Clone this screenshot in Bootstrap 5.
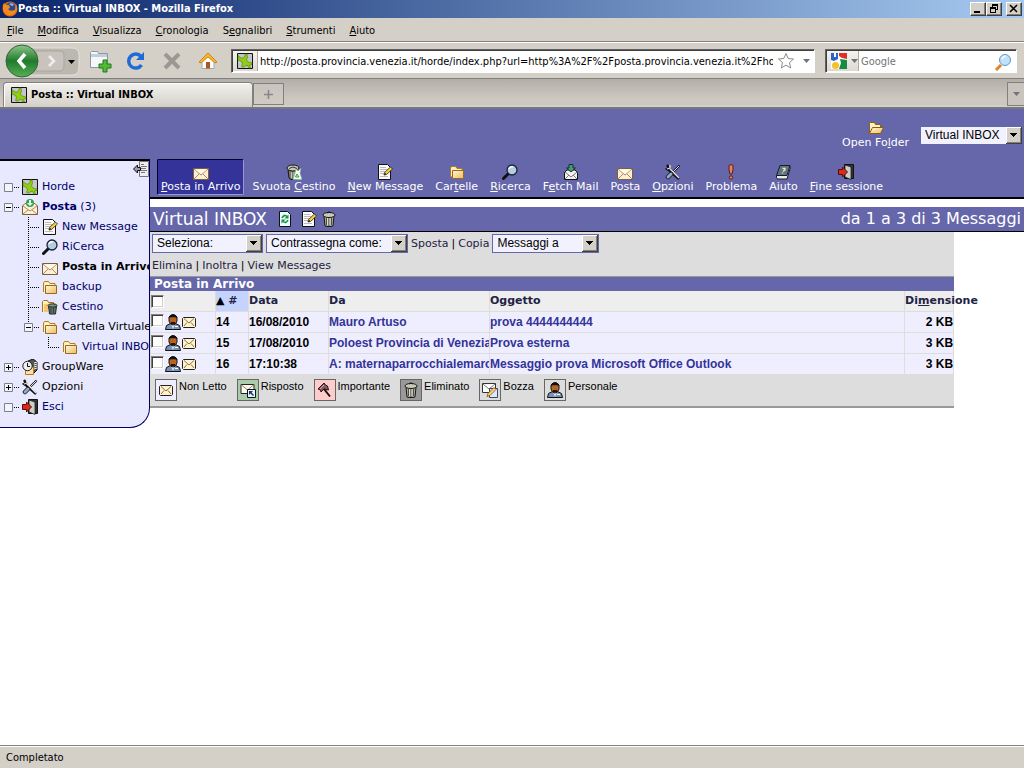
<!DOCTYPE html>
<html lang="it">
<head>
<meta charset="utf-8">
<meta name="viewport" content="width=device-width, initial-scale=1">
<title>Posta :: Virtual INBOX</title>
<link rel="stylesheet" href="https://cdn.jsdelivr.net/npm/bootstrap@5.3.0/dist/css/bootstrap.min.css">
<style>
:root{--chrome:#d4d0c8;--horde:#6666aa;--navy:#000066}
body{font-family:"DejaVu Sans Condensed","DejaVu Sans",sans-serif;font-size:11px;line-height:14px;color:#000;background:#fff}
button{border:0;padding:0;background:none;color:inherit;font:inherit;line-height:1}
svg{display:block;flex:none}
input{font:inherit;min-width:0}
.page{font-family:"DejaVu Sans",sans-serif}
.i16{width:16px;height:16px}
/* browser chrome */
.titlebar{height:18px;background:linear-gradient(90deg,#0a246a,#a6caf0);color:#fff;font-weight:700;padding:0 2px}
.winbtn{width:16px;height:14px;background:var(--chrome);border:1px solid;border-color:#fff #404040 #404040 #fff;box-shadow:inset -1px -1px #808080}
.chrome{background:var(--chrome)}
.menubar{height:24px;padding:3px 0 0 7px;gap:14px;border-bottom:1px solid #808080}
.menubar a{color:#000;text-decoration:none}
.navrow{height:37px;border-top:1px solid #fff;border-bottom:1px solid #808080;padding:0 7px 0 2px}
.backs{width:80px}
.tool{width:36px;display:flex;justify-content:center}
.field{height:24px;background:#fff;border:1px solid;border-color:#606060 #fff #fff #606060;box-shadow:inset 1px 1px #404040}
.field input{border:0;outline:0;background:none;padding:2px 0 0;margin-left:2px;flex:1}
.urlbox{margin-left:5px}
.findbox{margin-left:10px;width:192px}
.fieldbtn{height:20px;background:linear-gradient(#f4f3f0,#dcd9d2);border-right:1px solid #b0aca4;margin:1px 0 0 1px}
.tabs{height:30px;background:linear-gradient(#b3afa8,#ccc8c0 70%);border-bottom:2px solid #77777f;padding:3px 0 0 3px;box-shadow:inset 0 -2px #d4d0c8}
.tabitem{width:250px;height:25px;border:1px solid #808080;border-bottom:0;border-radius:4px 4px 0 0;background:linear-gradient(#f2f1ee,#d4d0c8);font-weight:700;padding:0 7px;box-shadow:inset 1px 1px #fff}
.tabnew{width:31px;height:22px;margin-top:1px;border:1px solid #808080;background:linear-gradient(#c8c4bd,#d0ccc4)}
.tablist{width:17px;height:24px;border:1px solid #808080;border-right:0;background:#c9c5be}
.statusbar{height:22px;background:var(--chrome);border-top:1px solid #fff;box-shadow:0 -1px #808080;padding:1px 6px 0}
/* webmail */
.top{background:var(--horde);height:50px;gap:11px;padding:2px 1px 0 0}
.page a{text-decoration:none}
.openf{color:#fff}
.pick{appearance:none;border:1px solid var(--horde);border-radius:0;background:#f2f2ff url("data:image/svg+xml,%3Csvg xmlns='http://www.w3.org/2000/svg' width='16' height='17' shape-rendering='crispEdges'%3E%3Crect width='16' height='17' fill='%23404040'/%3E%3Crect width='15' height='16' fill='%23fff'/%3E%3Crect x='1' y='1' width='14' height='15' fill='%23808080'/%3E%3Crect x='1' y='1' width='13' height='14' fill='%23d4d0c8'/%3E%3Cpath d='M4 6h7v1h-1v1h-1v1h-1v1h-1v-1h-1v-1h-1v-1h-1z'/%3E%3C/svg%3E") no-repeat right center;font:12px/17px "Liberation Sans",Arial,sans-serif;color:#000;height:19px;padding:0 18px 0 4px}
.side{width:150px;border-top:2px solid #000;border-right:1px solid var(--navy);border-bottom:1px solid var(--navy);border-radius:0 0 20px 0;background:#e8e8ff;padding:16px 0 10px;position:relative;overflow:hidden;flex:none}
.side ul{list-style:none;margin:0;padding:0 0 0 20px}
.side>ul{padding-left:2px}
.leaf{display:flex;align-items:center;height:20px;white-space:nowrap;color:var(--navy)}
.leaf a{color:inherit;margin-left:4px}
.leaf.dark{color:#000}
.twig{width:20px;height:20px}
.collapser{position:absolute;top:0;right:0}
.mainpane{min-width:0}
.bar{background:var(--horde);height:40px;border-bottom:2px solid #000;gap:4px;padding:0 7px}
.bar a{color:#fff;border:1px solid transparent;padding:1px 3px 0;height:36px;white-space:nowrap;display:flex;flex-direction:column;align-items:center;justify-content:end;border-radius:2px}
.bar a.on{background:#333399;border-color:#000033 #9999cc #9999cc #000033}
.heading{background:var(--horde);border-bottom:1px solid #000;margin-top:8px;height:25px;color:#fff;font-size:16px;line-height:20px;padding:0 3px}
.heading h1{font-size:17px;line-height:20px;font-weight:400;margin:0 6px 0 0}
.sheet{width:92%;background:#ddd;border-bottom:2px solid #999}
.acts{height:22px;padding:1px 2px 0;gap:3px}
.acts a{color:#222244}
.folder{background:var(--horde);color:#fff;font-size:12px;font-weight:700;line-height:14px;height:15px;border-top:1px solid #999;padding-left:4px;margin:0}
.mails{table-layout:fixed;width:100%;border-collapse:separate;border-spacing:1px;margin:-1px 0}
.mails td,.mails th{height:20px;padding:0;white-space:nowrap;vertical-align:middle}
.mails th{background:#eee;color:#222244;font-weight:700}
.mails th a{color:inherit}
.mails th.sorted{background:#c5d4ff}
.mails td{background:#eeeeff;font:bold 12px/18px "Liberation Sans",Arial,sans-serif}
.mails td a{color:#333399}
.mails .cut{overflow:hidden}
.tick{appearance:none;width:13px;height:13px;margin:0 1px 0 0;background:#fff;border:1px solid;border-color:#808080 #fff #fff #808080;box-shadow:inset 1px 1px #404040,inset -1px -1px #d4d0c8;flex:none}
.keys{height:32px;padding:5px 5px 0;gap:10px;font:11px/14px "Liberation Sans",Arial,sans-serif}
.swatch{width:22px;height:22px;border:1px solid #666;padding:2px;margin-right:2px}
.unread{background:#eeeeff}.answered{background:#aaccaa}.important{background:#ffcccc}.deleted{background:#999}
</style>
</head>
<body class="d-flex flex-column min-vh-100">
<svg width="0" height="0" class="position-absolute" aria-hidden="true">
<defs>
<linearGradient id="gr" x2="0" y2="1"><stop stop-color="#8cc68c"/><stop offset=".5" stop-color="#1f7a2a"/><stop offset="1" stop-color="#58b058"/></linearGradient>
<linearGradient id="fold" x2="1" y2="1"><stop stop-color="#fff8dc"/><stop offset="1" stop-color="#eebb5c"/></linearGradient>
</defs>
<symbol id="horde" viewBox="0 0 16 16"><path d="M.5.5h15v15H.5z" fill="#c2c6cc" stroke="#111"/><path d="M1 2.500l3 2.500h2.500L8 3V1h2l.5 3-1 3 1.500 2 4 1v1.500l-2.500.5 1 3H12l-1.500-2.500-2 0-1 1.500L5 14l-.5-1 1-2-1-2.500L1 7z" fill="#91cd10" stroke="#4e7e08" stroke-width=".6"/></symbol>
<symbol id="mail" viewBox="0 0 16 16"><path d="M.5 4.500h15v11H.5z" fill="#fdeed4" stroke="#77603f"/><path d="M1 5l7 6 7-6M1 15l5-5M15 15l-5-5" fill="none" stroke="#b18b63"/><path d="M2 5.500h12l-6 4.500z" fill="#fffaf0"/></symbol>
<symbol id="mailk" viewBox="0 0 16 16"><path d="M2.500 3.500h11l1 1v8l-1 1h-11l-1-1v-8z" fill="#fff2cc" stroke="#222"/><path d="M3 4.500l5 4.500 5-4.500M3 12l3-3.500M13 12l-3-3.500" fill="none" stroke="#8b714a"/></symbol>
<symbol id="post" viewBox="0 0 16 16"><path d="M.5 7L3 4.500h10L15.500 7v8.500H.5z" fill="#fdeed4" stroke="#77603f"/><path d="M1 7l7 5 7-5M1 15l5-4M15 15l-5-4" fill="none" stroke="#b18b63"/><circle cx="8" cy="4" r="4" fill="#30a350"/><path d="M7 1h2v3h2L8 7 5 4h2z" fill="#eaffea"/></symbol>
<symbol id="note" viewBox="0 0 16 16"><path d="M1.500.5h9l3 3v12h-12z" fill="#fafafa" stroke="#111"/><path d="M3 3.500h6M3 5.500h7M3 7.500h5M3 9.500h4M3 12.500h8" stroke="#bbb"/><path d="M7 11l.5-2.500L13.500 3l2 2-6 5.500z" fill="#ffcf3a" stroke="#222" stroke-width=".8"/><path d="M7 11l1-2 1.500 1z" fill="#111"/></symbol>
<symbol id="lens" viewBox="0 0 16 16"><path d="M1.500 14.500L6 10" stroke="#111" stroke-width="3" stroke-linecap="round"/><circle cx="10" cy="6" r="5" fill="#b4cde6" stroke="#1c2430" stroke-width="1.300"/><path d="M7 5a3 3 0 0 1 4-2" stroke="#fff" stroke-width="1.500" fill="none"/></symbol>
<symbol id="folder" viewBox="0 0 16 16"><path d="M1.500 13V4l1-1.500h4l1.500 2h5v2" fill="#fff1bd" stroke="#b37b20"/><path d="M3.500 6.500h11v8h-11z" fill="url(#fold)" stroke="#9a691d"/></symbol>
<symbol id="folderopen" viewBox="0 0 16 16"><path d="M1.500 13V3.500l1-1h4l1 2h5v3" fill="#fff1bd" stroke="#8a5c14"/><path d="M1.500 13.500l3-6h11l-3 6z" fill="url(#fold)" stroke="#8a5c14"/></symbol>
<symbol id="can" viewBox="0 0 16 16"><path d="M3 5h10l-1 10-2 .5H6L4 15z" fill="#a7a797" stroke="#181818"/><path d="M5.500 7v7M8 7v8M10.500 7v7" stroke="#4e4e45"/><path d="M6.500 7v7M9 7v7" stroke="#deded0"/><ellipse cx="8" cy="4" rx="6" ry="2.500" fill="#c9c9b9" stroke="#181818"/><path d="M6 2q2-2.500 4 0" fill="none" stroke="#181818"/></symbol>
<symbol id="bin" viewBox="0 0 16 16"><path d="M.5 13V2.500l1-1h4l1 2h5v3" fill="#fff1bd" stroke="#a77320"/><path d="M2 5h4v8H2z" fill="#f1c874"/><path d="M6.500 7h8l-1 8h-6z" fill="#65766a" stroke="#1d2520"/><ellipse cx="10.500" cy="6.500" rx="4.500" ry="1.700" fill="#7f9485" stroke="#1d2520"/><path d="M9 9v5M11.500 9v5" stroke="#33443a"/></symbol>
<symbol id="emptycan" viewBox="0 0 16 16"><path d="M2 6h10l-1 9.500H5L3 14z" fill="#77776c" stroke="#161616"/><path d="M5.500 8v6M8 8v6" stroke="#c9c9b9"/><ellipse cx="7" cy="4" rx="6" ry="3" fill="#c9c9b9" stroke="#161616"/><path d="M3 4.500q4-3 8 0" fill="none" stroke="#333"/><path d="M10 5l2 2 3-3-1 5 2 6.500H7L9 9z" fill="#f3fff3" stroke="#8ab092" stroke-width=".7"/><path d="M9.500 13l1.500-3 2 3z" fill="none" stroke="#2d9b49"/></symbol>
<symbol id="fetch" viewBox="0 0 16 16"><path d="M1.500 8.500L4 6h8l2.500 2.500v7h-13z" fill="#f3f3f3" stroke="#111"/><path d="M2 8l6 5 6-5M2 15l4-4M14 15l-4-4" fill="none" stroke="#777"/><path d="M6 .5h4V4h2.500L8 8 3.500 4H6z" fill="#4b9a6a" stroke="#133"/></symbol>
<symbol id="tools" viewBox="0 0 16 16"><path d="M14.500 1.500L7 9" stroke="#111" stroke-width="2"/><path d="M14 2L8 8" stroke="#ddd"/><path d="M2 1l2 3-2 1 3 2 9 8" fill="none" stroke="#111" stroke-width="2.400"/><path d="M5 1v3L2 5M5 5l9 9" fill="none" stroke="#e4e4e4" stroke-width="1.300"/><path d="M6 10l-3 3" stroke="#111" stroke-width="4.500" stroke-linecap="round"/><path d="M6 10l-3 3" stroke="#8daecb" stroke-width="3" stroke-linecap="round"/></symbol>
<symbol id="bang" viewBox="0 0 16 16"><path d="M6 1.500q2-2 4 0v4L9 10H7L6 5.500z" fill="#e98063" stroke="#5c1d10"/><circle cx="8" cy="13.500" r="1.700" fill="#e98063" stroke="#5c1d10"/></symbol>
<symbol id="book" viewBox="0 0 16 16"><path d="M1.500 11.500v2l1 1.500h9.500l3-10v-3" fill="#e9e9e9" stroke="#161c22"/><path d="M5 1.500h10l-3 10H1.500z" fill="#5c7488" stroke="#161c22"/><path d="M7.500 4.500h2.500v1.500L8 7.500m-.5 1v1" fill="none" stroke="#ffe9a0" stroke-width="1.300"/></symbol>
<symbol id="exit" viewBox="0 0 16 16"><path d="M6.500.5h9v14h-9z" fill="#333" stroke="#111"/><path d="M7 1l6 2V15.500L7 13z" fill="#c9ceca" stroke="#111" stroke-width=".7"/><path d="M.5 5.500h4V3l5 5-5 5v-2.500h-4z" fill="#dc2a1d" stroke="#5d0b06"/></symbol>
<symbol id="group" viewBox="0 0 16 16"><path d="M6 2l5-2 4 3v8l-4 4H6z" fill="#555" stroke="#111"/><path d="M12 4l3-1M12 6l3-1M12 8l3-1M12 10l3-1" stroke="#eee"/><path d="M3.500 8h8v7.500h-8z" fill="#ffe0a2" stroke="#b57917"/><circle cx="5.500" cy="7" r="4.700" fill="#eee" stroke="#222"/><path d="M5.500 4v3.500H8" fill="none" stroke="#111"/></symbol>
<symbol id="refresh" viewBox="0 0 16 16"><path d="M2.500.5h8l3 3v12h-11z" fill="#eefaff" stroke="#111"/><path d="M5 7q2-4 5-1.500M11 9q-2 4-5 1.500" fill="none" stroke="#16963c" stroke-width="1.600"/><path d="M11.500 3.500v4h-4zM4.500 12.500v-4h4z" fill="#16963c"/></symbol>
<symbol id="man" viewBox="0 0 16 16"><path d="M.5 15.500l1-4 4-2h5l4 2 1 4z" fill="#7794b8" stroke="#111"/><path d="M8 15l-2-5h4z" fill="#dce9f5"/><path d="M4 3q4-5 8 0v4q-1 4-4 4T4 7z" fill="#b86420" stroke="#151515"/><path d="M4 4q0-3.500 4-3.500T12 4l-2-.8H6z" fill="#111"/><path d="M6 8h4v2H6z" fill="#281505"/><path d="M10 12.500h3" stroke="#fff"/></symbol>
<symbol id="reply" viewBox="0 0 16 16"><path d="M1 2.500h13v9H1z" fill="#fff9e6" stroke="#222"/><path d="M1.500 3L7.500 8l6-5" fill="none" stroke="#888"/><path d="M7.500 7.500h8v8h-8z" fill="#e8f2ff" stroke="#111"/><path d="M9 9h4l-1.400 1.400L14 13l-1 1-2.600-2.400L9 13z" fill="#123a72"/></symbol>
<symbol id="flag" viewBox="0 0 16 16"><path d="M7 7l6 7.500" stroke="#111" stroke-width="2"/><path d="M1 7l6-6 1.500 2 2 1 1 4-2.500-.5-1.500-1L4 10l-.5-2z" fill="#8a5a62" stroke="#241214"/><path d="M3 7l4-4" stroke="#cfa5a5"/></symbol>
<symbol id="draft" viewBox="0 0 16 16"><path d="M.5 1.500h13v9H.5z" fill="#fff" stroke="#333"/><path d="M1 2l6 5 6-5" fill="none" stroke="#777"/><path d="M7.500 6.500h8v9h-8z" fill="#d8ecff" stroke="#446"/><path d="M5 14.500l1-3 6-6 2 2-6 6z" fill="#ffd36a" stroke="#7a4c10" stroke-width=".8"/></symbol>
<symbol id="caret" viewBox="0 0 7 4"><path d="M0 0h7L3.500 4z" fill="currentColor"/></symbol>
<symbol id="t-none" viewBox="0 0 20 20"><path d="M2.500 6.500h8v8h-8z" fill="#f4f4ff" stroke="#808080"/><path d="M12 10.500h6" stroke="#000" stroke-dasharray="1 1"/></symbol>
<symbol id="t-minus" viewBox="0 0 20 20"><use href="#t-none"/><path d="M4 10.500h5" stroke="#000"/></symbol>
<symbol id="t-plus" viewBox="0 0 20 20"><use href="#t-none"/><path d="M4 10.500h5M6.500 8v5" stroke="#000"/></symbol>
<symbol id="t-tee" viewBox="0 0 20 20"><path d="M6.500 0v20M8 10.500h10" stroke="#000" stroke-dasharray="1 1"/></symbol>
<symbol id="t-end" viewBox="0 0 20 20"><path d="M6.500 0v11M8 10.500h10" stroke="#000" stroke-dasharray="1 1"/></symbol>
<symbol id="t-fold" viewBox="0 0 20 20"><path d="M6.500 0v6" stroke="#000" stroke-dasharray="1 1"/><use href="#t-minus"/></symbol>
</svg>

<header class="flex-shrink-0">
<div class="titlebar d-flex align-items-center">
<svg class="i16" viewBox="0 0 16 16"><circle cx="8" cy="8" r="7.500" fill="#e66a0d"/><circle cx="8.500" cy="6.500" r="5" fill="#274b9a"/><path d="M1 4l1-2 2 2 3 0 1 3-2 1q2 3 7 1l1-6q3 6-2 10-5 3-9-1Q0 8 1 4z" fill="#f58a1a"/><path d="M7 3q3-2 5 1l-2 1z" fill="#8cc0ec"/></svg>
<span class="flex-grow-1 text-truncate">Posta :: Virtual INBOX - Mozilla Firefox</span>
<button class="winbtn" aria-label="Riduci"><svg width="14" height="12" viewBox="0 0 14 12"><path d="M3 8h6v2H3z"/></svg></button>
<button class="winbtn" aria-label="Ripristina"><svg width="14" height="12" viewBox="0 0 14 12" shape-rendering="crispEdges"><path d="M5 1h6v6H9V6h1V3H6v1H5zM3 4h6v6H3zm1 2v3h4V6z" fill-rule="evenodd"/></svg></button>
<button class="winbtn ms-1" aria-label="Chiudi"><svg width="14" height="12" viewBox="0 0 14 12"><path d="M3 2l7 7M10 2L3 9" stroke="#000" stroke-width="1.600"/></svg></button>
</div>
<nav class="chrome menubar d-flex align-items-center">
<a href="#"><u>F</u>ile</a><a href="#"><u>M</u>odifica</a><a href="#"><u>V</u>isualizza</a><a href="#"><u>C</u>ronologia</a><a href="#">S<u>e</u>gnalibri</a><a href="#"><u>S</u>trumenti</a><a href="#"><u>A</u>iuto</a>
</nav>
<div class="chrome navrow d-flex align-items-center">
<button class="backs" aria-label="Indietro e avanti"><svg width="78" height="34" viewBox="0 0 78 34"><path d="M16 4h54q7 0 7 7v12q0 8-7 8H16z" fill="#bbb8b0" stroke="#e4e1da"/><path d="M34 7h23q5 0 5 5v10q0 5-5 5H34z" fill="#c8c4bd" stroke="#aaa69f"/><circle cx="20" cy="17" r="16" fill="url(#gr)" stroke="#38613a"/><path d="M23 10l-6 7 6 7" fill="none" stroke="#fff" stroke-width="3.500"/><path d="M47 12l5 5-5 5" fill="none" stroke="#eee" stroke-width="2.500"/><path d="M66 16h7l-3.500 4z"/></svg></button>
<button class="tool" aria-label="Nuova scheda"><svg width="24" height="24" viewBox="0 0 24 24"><path d="M2.500 18.500v-15l1-1h6l1 2h9v14z" fill="#f6f7f9" stroke="#8d96a3"/><path d="M3 5h16v3H3z" fill="#c2cedd"/><path d="M15 11h4v4h4v4h-4v4h-4v-4h-4v-4h4z" fill="#53ba38" stroke="#21781a"/></svg></button>
<button class="tool" aria-label="Ricarica"><svg width="20" height="20" viewBox="0 0 20 20"><path d="M15.500 14A7 7 0 1 1 15 5.500" fill="none" stroke="#1f6bd6" stroke-width="3.500"/><path d="M18 1v8h-8z" fill="#1f6bd6"/></svg></button>
<button class="tool" aria-label="Termina"><svg width="20" height="20" viewBox="0 0 20 20"><path d="M3 3l14 14M17 3L3 17" stroke="#9a9892" stroke-width="4"/></svg></button>
<button class="tool" aria-label="Pagina iniziale"><svg width="20" height="20" viewBox="0 0 20 20"><path d="M4 10l6-5 6 5v7.500H4z" fill="#fff" stroke="#a9a9a9"/><path d="M8 11h4v6.500H8z" fill="#a55a22"/><path d="M1 11l9-9 9 9-2 1-7-6-7 6z" fill="#f7b72e" stroke="#cc8413"/></svg></button>
<div class="field urlbox d-flex flex-grow-1">
<span class="fieldbtn px-1 d-flex align-items-center"><svg class="i16"><use href="#horde"/></svg></span>
<input aria-label="Indirizzo" value="http://posta.provincia.venezia.it/horde/index.php?url=http%3A%2F%2Fposta.provincia.venezia.it%2Fhorde">
<span class="d-flex align-items-center gap-2 px-1 text-secondary"><svg width="18" height="18" viewBox="0 0 18 18"><path d="M9 1.500l2.200 5 5.300.5-4 3.600 1.200 5.400L9 13.200 4.300 16l1.200-5.400-4-3.600 5.300-.5z" fill="#fff" stroke="#8c8c8c"/></svg><svg width="7" height="4"><use href="#caret"/></svg></span>
</div>
<div class="field findbox d-flex">
<span class="fieldbtn d-flex align-items-center text-secondary gap-1 ps-1"><svg class="i16" viewBox="0 0 16 16"><path d="M0 0h16v16H0z" fill="#fff"/><path d="M8 0h8v6l-5-1-3-2z" fill="#de2f27"/><path d="M0 0h3v4h2V0h2v6l-4 2-3-1z" fill="#2b62c4"/><path d="M9 6l7 1v9h-8l2-6z" fill="#188b42"/><circle cx="4.500" cy="12.500" r="3.500" fill="#f4c02c"/></svg><svg width="7" height="4"><use href="#caret"/></svg></span>
<input aria-label="Cerca" placeholder="Google" size="8">
<svg width="18" height="18" viewBox="0 0 18 18" class="mt-1 me-1"><path d="M2 16l5-5" stroke="#e28324" stroke-width="3"/><circle cx="11" cy="6" r="5.500" fill="#bfe2fb" stroke="#6592c0"/><path d="M8 5q1-3 4-3" stroke="#fff" stroke-width="1.500" fill="none"/></svg>
</div>
</div>
<div class="tabs d-flex">
<div class="tabitem d-flex align-items-center gap-1"><svg class="i16"><use href="#horde"/></svg>Posta :: Virtual INBOX</div>
<button class="tabnew d-flex align-items-center justify-content-center" aria-label="Apri scheda"><svg width="9" height="9"><path d="M4.500 0v9M0 4.500h9" stroke="#88888c" stroke-width="1.600"/></svg></button>
<button class="tablist ms-auto d-flex align-items-center justify-content-center text-secondary" aria-label="Elenco schede"><svg width="7" height="4"><use href="#caret"/></svg></button>
</div>
</header>

<div class="page flex-grow-1">
<div class="top d-flex justify-content-end align-items-center">
<a class="openf d-flex flex-column align-items-center" href="#"><svg class="i16"><use href="#folderopen"/></svg><span>Open Fo<u>l</u>der</span></a>
<select class="pick" aria-label="Cartella" style="width:103px"><option>Virtual INBOX</option></select>
</div>
<div class="d-flex align-items-start">
<aside class="side">
<button class="collapser" aria-label="Nascondi"><svg width="16" height="17" viewBox="0 0 16 17"><path d="M6.500.5h9v15h-9z" fill="#eee" stroke="#777"/><path d="M8 3.500h3M8 5.500h6M8 7.500h5M8 9.500h6M8 11.500h4" stroke="#777"/><path d="M.5 8l4-4v2.500h3v3h-3V12z" fill="#9a9ab0" stroke="#111"/></svg></button>
<ul>
<li><div class="leaf"><svg class="twig"><use href="#t-none"/></svg><svg class="i16"><use href="#horde"/></svg><a href="#">Horde</a></div></li>
<li><div class="leaf"><svg class="twig"><use href="#t-minus"/></svg><svg class="i16"><use href="#post"/></svg><a href="#"><b>Posta</b> (3)</a></div>
<ul>
<li><div class="leaf"><svg class="twig"><use href="#t-tee"/></svg><svg class="i16"><use href="#note"/></svg><a href="#">New Message</a></div></li>
<li><div class="leaf"><svg class="twig"><use href="#t-tee"/></svg><svg class="i16"><use href="#lens"/></svg><a href="#">RiCerca</a></div></li>
<li><div class="leaf dark"><svg class="twig"><use href="#t-tee"/></svg><svg class="i16"><use href="#mail"/></svg><a href="#"><b>Posta in Arrivo</b></a></div></li>
<li><div class="leaf"><svg class="twig"><use href="#t-tee"/></svg><svg class="i16"><use href="#folder"/></svg><a href="#">backup</a></div></li>
<li><div class="leaf"><svg class="twig"><use href="#t-tee"/></svg><svg class="i16"><use href="#bin"/></svg><a href="#">Cestino</a></div></li>
<li><div class="leaf dark"><svg class="twig"><use href="#t-fold"/></svg><svg class="i16"><use href="#folder"/></svg><a href="#">Cartella Virtuale</a></div>
<ul><li><div class="leaf"><svg class="twig"><use href="#t-end"/></svg><svg class="i16"><use href="#folder"/></svg><a href="#">Virtual INBOX</a></div></li></ul></li>
</ul></li>
<li><div class="leaf dark"><svg class="twig"><use href="#t-plus"/></svg><svg class="i16"><use href="#group"/></svg><a href="#">GroupWare</a></div></li>
<li><div class="leaf dark"><svg class="twig"><use href="#t-plus"/></svg><svg class="i16"><use href="#tools"/></svg><a href="#">Opzioni</a></div></li>
<li><div class="leaf"><svg class="twig"><use href="#t-none"/></svg><svg class="i16"><use href="#exit"/></svg><a href="#">Esci</a></div></li>
</ul>
</aside>
<main class="mainpane flex-grow-1">
<nav class="bar d-flex align-items-start">
<a class="on" href="#"><svg class="i16"><use href="#mail"/></svg><span><u>P</u>osta in Arrivo</span></a>
<a href="#"><svg class="i16"><use href="#emptycan"/></svg><span>Svuota <u>C</u>estino</span></a>
<a href="#"><svg class="i16"><use href="#note"/></svg><span><u>N</u>ew Message</span></a>
<a href="#"><svg class="i16"><use href="#folder"/></svg><span>Car<u>t</u>elle</span></a>
<a href="#"><svg class="i16"><use href="#lens"/></svg><span><u>R</u>icerca</span></a>
<a href="#"><svg class="i16"><use href="#fetch"/></svg><span>F<u>e</u>tch Mail</span></a>
<a href="#"><svg class="i16"><use href="#mail"/></svg><span>Posta</span></a>
<a href="#"><svg class="i16"><use href="#tools"/></svg><span><u>O</u>pzioni</span></a>
<a href="#"><svg class="i16"><use href="#bang"/></svg><span>Problema</span></a>
<a href="#"><svg class="i16"><use href="#book"/></svg><span>Aiuto</span></a>
<a href="#"><svg class="i16"><use href="#exit"/></svg><span><u>F</u>ine sessione</span></a>
</nav>
<div class="heading d-flex align-items-center">
<h1>Virtual INBOX</h1>
<button class="me-1" aria-label="Aggiorna"><svg class="i16 m-1"><use href="#refresh"/></svg></button><button aria-label="Modifica" class="me-1"><svg class="i16"><use href="#note"/></svg></button><button aria-label="Svuota"><svg class="i16"><use href="#can"/></svg></button>
<span class="ms-auto">da 1 a 3 di 3 Messaggi</span>
</div>
<section class="sheet">
<div class="acts d-flex align-items-center">
<select class="pick" aria-label="Seleziona" style="width:111px"><option>Seleziona:</option></select>
<select class="pick" aria-label="Contrassegna" style="width:142px"><option>Contrassegna come:</option></select>
<a href="#">Sposta</a>|<a href="#">Copia</a>
<select class="pick" aria-label="Messaggi a" style="width:107px"><option>Messaggi a</option></select>
</div>
<div class="acts d-flex align-items-center"><a href="#">Elimina</a>|<a href="#">Inoltra</a>|<a href="#">View Messages</a></div>
<h2 class="folder">Posta in Arrivo</h2>
<table class="mails">
<colgroup><col style="width:64px"><col style="width:32px"><col style="width:79px"><col style="width:160px"><col><col style="width:48px"></colgroup>
<thead><tr><th><input type="checkbox" class="tick d-block" aria-label="Tutti"></th><th class="sorted"><span class="text-black">▲</span> #</th><th><a href="#">Data</a></th><th><a href="#">Da</a></th><th><a href="#">O<u>g</u>getto</a></th><th><a href="#">Di<u>m</u>ensione</a></th></tr></thead>
<tbody>
<tr><td><div class="d-flex"><input type="checkbox" class="tick" aria-label="Messaggio 14"><svg class="i16"><use href="#man"/></svg><svg class="i16"><use href="#mailk"/></svg></div></td><td>14</td><td>16/08/2010</td><td class="cut"><a href="#">Mauro Artuso</a></td><td><a href="#">prova 4444444444</a></td><td class="text-end">2 KB</td></tr>
<tr><td><div class="d-flex"><input type="checkbox" class="tick" aria-label="Messaggio 15"><svg class="i16"><use href="#man"/></svg><svg class="i16"><use href="#mailk"/></svg></div></td><td>15</td><td>17/08/2010</td><td class="cut"><a href="#">Poloest Provincia di Venezia</a></td><td><a href="#">Prova esterna</a></td><td class="text-end">3 KB</td></tr>
<tr><td><div class="d-flex"><input type="checkbox" class="tick" aria-label="Messaggio 16"><svg class="i16"><use href="#man"/></svg><svg class="i16"><use href="#mailk"/></svg></div></td><td>16</td><td>17:10:38</td><td class="cut"><a href="#">A: maternaparrocchialemarcon</a></td><td><a href="#">Messaggio prova Microsoft Office Outlook</a></td><td class="text-end">3 KB</td></tr>
</tbody>
</table>
<div class="keys d-flex align-items-start">
<span class="d-flex"><svg class="swatch unread"><use href="#mailk"/></svg>Non Letto</span>
<span class="d-flex"><svg class="swatch answered"><use href="#reply"/></svg>Risposto</span>
<span class="d-flex"><svg class="swatch important"><use href="#flag"/></svg>Importante</span>
<span class="d-flex"><svg class="swatch deleted"><use href="#can"/></svg>Eliminato</span>
<span class="d-flex"><svg class="swatch"><use href="#draft"/></svg>Bozza</span>
<span class="d-flex"><svg class="swatch"><use href="#man"/></svg>Personale</span>
</div>
</section>
</main>
</div>
</div>
<footer class="statusbar d-flex align-items-center flex-shrink-0">Completato</footer>
<script src="https://cdn.jsdelivr.net/npm/bootstrap@5.3.0/dist/js/bootstrap.bundle.min.js"></script>
</body>
</html>
